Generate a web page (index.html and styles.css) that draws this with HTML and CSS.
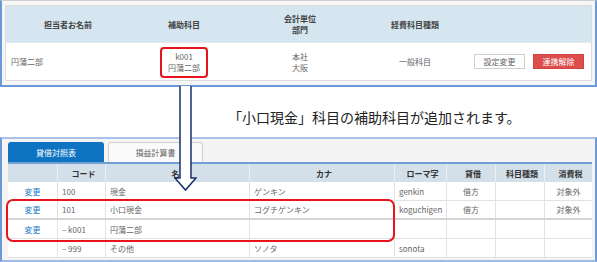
FILE: index.html
```html
<!DOCTYPE html>
<html lang="ja">
<head>
<meta charset="utf-8">
<link rel="stylesheet" href="styles.css">
</head>
<body>
<div class="page">
  <section class="frame-top">
    <div class="panel">
      <div class="trow thead">
        <div class="tc c1 center">担当者お名前</div>
        <div class="tc c2 center">補助科目</div>
        <div class="tc c3 center">会計単位<br>部門</div>
        <div class="tc c4 center">経費科目種類</div>
        <div class="tc c5"></div>
      </div>
      <div class="trow tbody">
        <div class="tc c1 left">円蒲二部</div>
        <div class="tc c2 center"><div class="hl">k001<br>円蒲二部</div></div>
        <div class="tc c3 center">本社<br>大阪</div>
        <div class="tc c4 center">一般科目</div>
        <div class="tc c5 btns"><span class="btn">設定変更</span><span class="btn red">連携解除</span></div>
      </div>
    </div>
  </section>

  <p class="caption">「小口現金」科目の補助科目が追加されます。</p>

  <section class="frame-bottom">
    <div class="tabs">
      <span class="tab active">貸借対照表</span>
      <span class="tab">損益計算書</span>
    </div>
    <div class="grid">
      <div class="grow ghead">
        <div class="g"></div>
        <div class="g">コード</div>
        <div class="g">名称</div>
        <div class="g">カナ</div>
        <div class="g">ローマ字</div>
        <div class="g">貸借</div>
        <div class="g">科目種類</div>
        <div class="g">消費税</div>
      </div>
      <div class="grow">
        <div class="g mid link">変更</div>
        <div class="g">100</div>
        <div class="g">現金</div>
        <div class="g">ゲンキン</div>
        <div class="g">genkin</div>
        <div class="g mid">借方</div>
        <div class="g"></div>
        <div class="g mid">対象外</div>
      </div>
      <div class="grow thick">
        <div class="g mid link">変更</div>
        <div class="g">101</div>
        <div class="g">小口現金</div>
        <div class="g">コグチゲンキン</div>
        <div class="g">koguchigen</div>
        <div class="g mid">借方</div>
        <div class="g"></div>
        <div class="g mid">対象外</div>
      </div>
      <div class="grow">
        <div class="g mid link">変更</div>
        <div class="g">– k001</div>
        <div class="g">円蒲二部</div>
        <div class="g"></div>
        <div class="g"></div>
        <div class="g"></div>
        <div class="g"></div>
        <div class="g"></div>
      </div>
      <div class="grow">
        <div class="g"></div>
        <div class="g">– 999</div>
        <div class="g">その他</div>
        <div class="g">ソノタ</div>
        <div class="g">sonota</div>
        <div class="g"></div>
        <div class="g"></div>
        <div class="g"></div>
      </div>
    </div>
  </section>

  <div class="redbox"></div>
  <svg class="arrow" width="23" height="106" viewBox="0 0 23 106">
    <polygon points="6,0 6,92 1,92 11.5,104 22,92 17,92 17,0" fill="#fff"/>
    <polyline points="6,0 6,92 1,92 11.5,104 22,92 17,92 17,0" fill="none" stroke="#1c2f6e" stroke-width="1.5"/>
  </svg>
</div>
</body>
</html>
```

FILE: styles.css
```css
* { box-sizing: border-box; margin: 0; padding: 0; }
html, body { background: #fff; }
body {
  width: 597px;
  height: 262px;
  overflow: hidden;
  font-family: "Noto Sans CJK JP", "Noto Sans", sans-serif;
  font-size: 8px;
  color: #666;
}
.page { position: relative; width: 597px; height: 262px; }

/* top screenshot */
.frame-top {
  height: 87px;
  border-top: 1px solid #d0d0d0;
  border-left: 2px solid #6b98d6;
  border-right: 2px solid #6b98d6;
  border-bottom: 2px solid #6b98d6;
  padding: 4px 3px 4px 3px;
  background: #f6f6f6;
}
.panel {
  height: 76px;
  border: 1px solid #dcdcdc;
  background: #fff;
}
.trow { display: grid; grid-template-columns: 124px 108px 124px 106px 123px; }
.thead { height: 37px; background: #d5e6f0; color: #444; font-weight: bold; border-bottom: 1px solid #e3e9ee; }
.tbody { height: 37px; }
.tc { display: flex; align-items: center; line-height: 11px; }
.center { justify-content: center; text-align: center; }
.left { padding-left: 5px; }
.hl {
  width: 48px;
  height: 31px;
  border: 2px solid #e8141b;
  border-radius: 4px;
  display: flex;
  align-items: center;
  justify-content: center;
  text-align: center;
  line-height: 11px;
  margin-top: 1px;
}
.btns { justify-content: flex-end; gap: 8px; padding-right: 7px; }
.btn {
  width: 51px;
  height: 15px;
  border: 1px solid #cfcfcf;
  background: #fff;
  display: flex;
  align-items: center;
  justify-content: center;
  color: #666;
}
.btn.red { background: #dc4d4b; border-color: #cf4441; color: #fff; }

/* caption */
.caption {
  height: 50px;
  padding: 21px 0 0 228px;
  font-size: 14px;
  line-height: 18px;
  color: #222;
}

/* bottom screenshot */
.frame-bottom {
  height: 125px;
  border-top: 2px solid #a9c3e6;
  border-left: 2px solid #6b98d6;
  border-right: 2px solid #6b98d6;
  border-bottom: 2px solid #9dbbe3;
  background: #f4f4f4;
  padding: 3px 3px 0 6px;
  overflow: hidden;
}
.tabs { display: flex; gap: 4px; height: 20px; }
.tab {
  width: 95px;
  height: 20px;
  display: flex;
  align-items: center;
  justify-content: center;
  border: 1px solid #cfcfcf;
  border-bottom: none;
  border-radius: 3px 3px 0 0;
  background: #fafafa;
  color: #666;
}
.tab.active { width: 96px; background: #0e74c2; border-color: #0e74c2; color: #fff; }
.grid { border-top: 2px solid #6fa0d2; background: #fff; }
.grow {
  display: grid;
  grid-template-columns: 49px 48px 144px 145px 52px 49px 49px 48px;
  height: 19px;
  border-bottom: 1px solid #e2e2e2;
}
.grow.thick { border-bottom: 2px solid #d4d4d4; }
.ghead { height: 18px; background: #d3dfe9; color: #333; font-weight: bold; border-bottom: none; }
.ghead .g { justify-content: center; border-left-color: #e9eff4; }
.g {
  display: flex;
  align-items: center;
  padding-left: 4px;
  border-left: 1px solid #e2e2e2;
  white-space: nowrap;
}
.g:first-child { border-left: none; }
.g.mid { justify-content: center; padding-left: 0; }
.link { color: #1a7bc9; }

/* overlays */
.redbox {
  position: absolute;
  left: 6px;
  top: 199px;
  width: 389px;
  height: 43px;
  border: 2px solid #e8141b;
  border-radius: 7px;
}
.arrow { position: absolute; left: 174px; top: 86px; }
```
